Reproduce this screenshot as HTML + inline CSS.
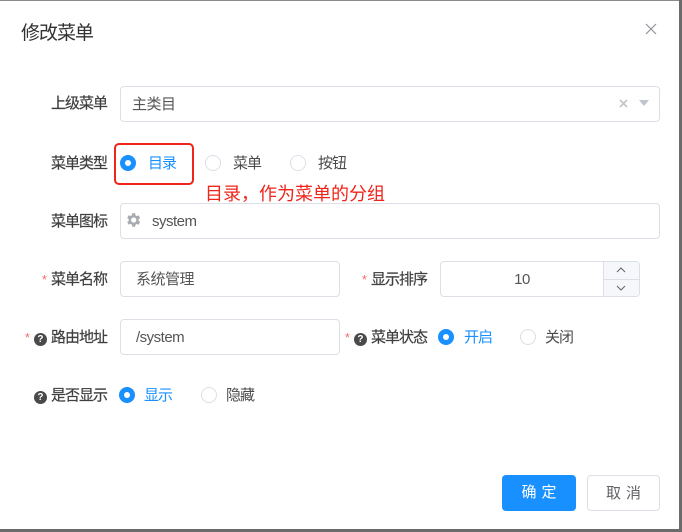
<!DOCTYPE html>
<html><head><meta charset="utf-8"><style>
*{margin:0;padding:0;box-sizing:border-box}
body{width:682px;height:532px;background:#fff;position:relative;overflow:hidden;font-family:"Liberation Sans","Noto Sans CJK SC",sans-serif;color:#606266}
.a{position:absolute}
.edge-r{right:0;top:0;width:3px;height:532px;background:#6b6b6b}
.edge-t{left:0;top:0;width:682px;height:1px;background:#8a8a8a}
.edge-b{left:0;bottom:0;width:682px;height:3px;background:#6b6b6b}
.title{left:21px;top:21px;font-size:19px;letter-spacing:-1px;color:#303133;line-height:26px}
.lbl{font-size:15px;letter-spacing:-1px;font-weight:400;color:#3f3f3f;line-height:20px;text-align:right;white-space:nowrap;-webkit-text-stroke:0.2px #3f3f3f}
.inp{border:1px solid #dcdfe6;border-radius:4px;height:36px;font-size:15px;letter-spacing:-0.5px;line-height:36px;color:#555}
.star{color:#f56c6c;font-size:13px;margin-right:5px;font-weight:400;-webkit-text-stroke:0}
.q{display:inline-block;width:13px;height:13px;border-radius:50%;background:#4a4a4a;color:#fff;font-size:10px;line-height:13px;text-align:center;font-weight:700;vertical-align:0px;margin-right:4px;letter-spacing:0;-webkit-text-stroke:0}
.r{width:16px;height:16px;border-radius:50%;border:1px solid #dcdfe6;background:#fff}
.r.on{border:none;background:#1890ff}
.r.on::after{content:"";position:absolute;left:5px;top:5px;width:6px;height:6px;border-radius:50%;background:#fff}
.rt{font-size:15px;letter-spacing:-1px;line-height:20px;color:#4a4a4a}
.rt.on{color:#1890ff}
.btn{border-radius:4px;font-size:15px;text-align:center;line-height:35px;letter-spacing:5px;padding-left:5px}
</style></head><body>
<div class="a edge-t"></div><div class="a edge-r"></div><div class="a edge-b"></div>
<div class="a title">修改菜单</div>
<svg class="a" style="left:645px;top:23px" width="12" height="12" viewBox="0 0 12 12"><path d="M1 1L11 11M11 1L1 11" stroke="#909399" stroke-width="1.2"/></svg>

<div class="a lbl" style="right:575px;top:94px">上级菜单</div>
<div class="a inp" style="left:120px;top:86px;width:540px;padding-left:11px">主类目</div>
<svg class="a" style="left:619px;top:99px" width="9" height="9" viewBox="0 0 9 9"><path d="M1 1L8 8M8 1L1 8" stroke="#c0c4cc" stroke-width="1.6"/></svg>
<svg class="a" style="left:639px;top:100px" width="10" height="6" viewBox="0 0 10 6"><path d="M0 0H10L5 6Z" fill="#c0c4cc"/></svg>

<div class="a lbl" style="right:575px;top:154px">菜单类型</div>
<div class="a" style="left:114px;top:143px;width:80px;height:42px;border:2px solid #f0241b;border-radius:5px"></div>
<div class="a r on" style="left:120px;top:155px"></div><div class="a rt on" style="left:148px;top:154px">目录</div>
<div class="a r" style="left:205px;top:155px"></div><div class="a rt" style="left:233px;top:154px">菜单</div>
<div class="a r" style="left:290px;top:155px"></div><div class="a rt" style="left:318px;top:154px">按钮</div>
<div class="a" style="left:205px;top:182px;font-size:18px;color:#f0241b;line-height:24px">目录，作为菜单的分组</div>

<div class="a lbl" style="right:575px;top:212px">菜单图标</div>
<div class="a inp" style="left:120px;top:203px;width:540px;padding-left:31px">system</div>
<svg class="a" style="left:124px;top:211px" width="18" height="18" viewBox="0 0 24 24"><path fill="#a8abb2" d="M19.4 13a7.5 7.5 0 0 0 0-2l2.1-1.6-2-3.5-2.5 1a7.7 7.7 0 0 0-1.7-1L14.9 3h-4l-.4 2.7a7.7 7.7 0 0 0-1.7 1l-2.5-1-2 3.5L6.4 11a7.5 7.5 0 0 0 0 2l-2.1 1.6 2 3.5 2.5-1a7.7 7.7 0 0 0 1.7 1l.4 2.9h4l.4-2.7a7.7 7.7 0 0 0 1.7-1l2.5 1 2-3.5zM12.9 15.5a3.5 3.5 0 1 1 0-7 3.5 3.5 0 0 1 0 7z"/></svg>

<div class="a lbl" style="right:575px;top:270px"><span class="star">*</span>菜单名称</div>
<div class="a inp" style="left:120px;top:261px;width:220px;padding-left:15px">系统管理</div>
<div class="a lbl" style="right:255px;top:270px"><span class="star">*</span>显示排序</div>
<div class="a inp" style="left:440px;top:261px;width:200px;text-align:center;padding-right:36px;font-size:15px">10</div>
<div class="a" style="left:603px;top:262px;width:36px;height:34px;border-left:1px solid #dcdfe6;background:#f5f7fa;border-radius:0 4px 4px 0"></div>
<div class="a" style="left:603px;top:279px;width:36px;height:1px;background:#dcdfe6"></div>
<svg class="a" style="left:616px;top:267px" width="10" height="6" viewBox="0 0 10 6"><path d="M1 5L5 1L9 5" stroke="#606266" fill="none"/></svg>
<svg class="a" style="left:616px;top:285px" width="10" height="6" viewBox="0 0 10 6"><path d="M1 1L5 5L9 1" stroke="#606266" fill="none"/></svg>

<div class="a lbl" style="right:575px;top:328px"><span class="star">*</span><span class="q">?</span>路由地址</div>
<div class="a inp" style="left:120px;top:319px;width:220px;padding-left:15px">/system</div>
<div class="a lbl" style="right:255px;top:328px"><span class="star">*</span><span class="q">?</span>菜单状态</div>
<div class="a r on" style="left:438px;top:329px"></div><div class="a rt on" style="left:464px;top:328px">开启</div>
<div class="a r" style="left:520px;top:329px"></div><div class="a rt" style="left:545px;top:328px">关闭</div>

<div class="a lbl" style="right:575px;top:386px"><span class="q">?</span>是否显示</div>
<div class="a r on" style="left:119px;top:387px"></div><div class="a rt on" style="left:144px;top:386px">显示</div>
<div class="a r" style="left:201px;top:387px"></div><div class="a rt" style="left:226px;top:386px">隐藏</div>

<div class="a btn" style="left:502px;top:475px;width:74px;height:36px;background:#1890ff;color:#fff">确定</div>
<div class="a btn" style="left:587px;top:475px;width:73px;height:36px;border:1px solid #dcdfe6;color:#606266">取消</div>
</body></html>
